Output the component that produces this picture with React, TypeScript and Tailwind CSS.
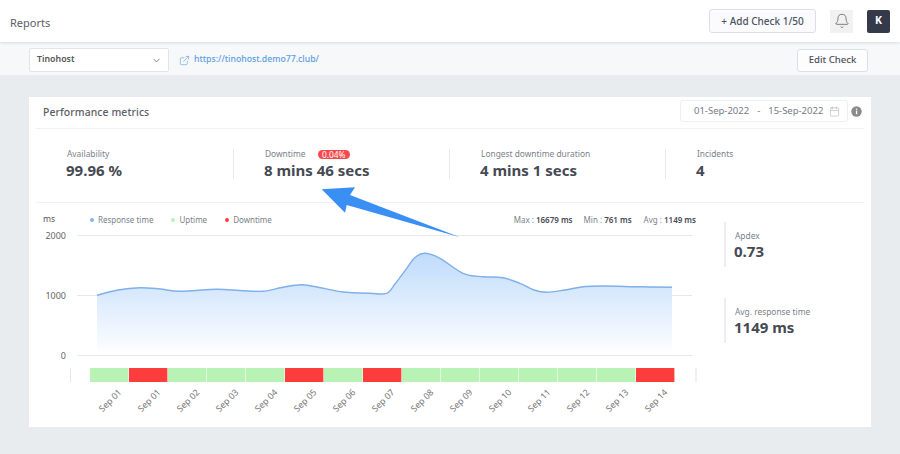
import React from "react";
import { Bell, Calendar, ChevronDown, ExternalLink } from "lucide-react";

const pts: [number, number][] = [
  [97, 295.3], [118, 290], [140, 287.7], [160, 289], [180, 291.3], [216.7, 289.3], [240, 290.5], [263, 291.3], [282, 287.5], [301.7, 284.7], [322, 288], [343, 292],
  [370, 293.3], [386.7, 293.3], [395, 284], [406.7, 268.3], [415, 257.5], [425, 253.3], [440, 258.3], [463, 273.3], [483, 276.7], [503, 277.7], [520, 283.3],
  [534, 290], [546.7, 292.3], [565, 290], [583, 286.7], [603, 286], [640, 286.8], [672, 287.3],
];

function linePath(p: [number, number][]) {
  let d = `M${p[0][0]} ${p[0][1]}`;
  for (let i = 0; i < p.length - 1; i++) {
    const a = p[Math.max(i - 1, 0)], b = p[i], c = p[i + 1], e = p[Math.min(i + 2, p.length - 1)];
    const c1x = b[0] + (c[0] - a[0]) / 6, c1y = b[1] + (c[1] - a[1]) / 6;
    const c2x = c[0] - (e[0] - b[0]) / 6, c2y = c[1] - (e[1] - b[1]) / 6;
    d += ` C${c1x.toFixed(1)} ${c1y.toFixed(1)} ${c2x.toFixed(1)} ${c2y.toFixed(1)} ${c[0]} ${c[1]}`;
  }
  return d;
}

const statuses = ["g", "r", "g", "g", "g", "r", "g", "r", "g", "g", "g", "g", "g", "g", "r"];
const labels = ["Sep 01", "Sep 01", "Sep 02", "Sep 03", "Sep 04", "Sep 05", "Sep 06", "Sep 07", "Sep 08", "Sep 09", "Sep 10", "Sep 11", "Sep 12", "Sep 13", "Sep 14"];

function Chart() {
  const line = linePath(pts);
  return (
    <svg width={664} height={202} viewBox="36 225 664 202" className="block">
      <defs>
        <linearGradient id="areaFill" x1="0" y1="253" x2="0" y2="355" gradientUnits="userSpaceOnUse">
          <stop offset="0" stopColor="#bfdbfb" />
          <stop offset="1" stopColor="#ffffff" />
        </linearGradient>
      </defs>
      {[[235, "2000"], [295, "1000"], [355, "0"]].map(([y, t]) => (
        <g key={String(t)}>
          <line x1={77} x2={692} y1={Number(y) + 0.5} y2={Number(y) + 0.5} stroke="#e8e8ea" strokeWidth={1} />
          <text x={66} y={Number(y) + 3.5} textAnchor="end" fontSize={9} fill="#666">{t}</text>
        </g>
      ))}
      <path d={`${line} L672 355 L97 355 Z`} fill="url(#areaFill)" />
      <path d={line} fill="none" stroke="#7fb0ea" strokeWidth={1.4} />
      <line x1={70.5} x2={70.5} y1={368} y2={382} stroke="#e6e6e8" />
      <rect x={695} y={368} width={2} height={14} fill="#eff0f6" />
      {statuses.map((s, i) => (
        <rect key={i} x={90 + i * 39} y={368} width={38.4} height={14} fill={s === "g" ? "#b9f2b5" : "#fd3c3c"} />
      ))}
      {labels.map((l, i) => (
        <text key={i} transform={`translate(${122 + i * 39} 393) rotate(-45)`} textAnchor="end" fontSize={8.8} fill="#777">{l}</text>
      ))}
    </svg>
  );
}

function Metric({ label, value, className, badge }: { label: string; value: string; className: string; badge?: string }) {
  return (
    <div className={`h-[30px] pl-[31px] ${className}`}>
      <div className="-mt-px flex h-[12px] items-center text-[8.4px] leading-[12px] text-[#7a7f8a]">
        <span className={badge ? "w-[53px]" : ""}>{label}</span>
        {badge && <span className="rounded-full bg-[#f9484c] px-[4px] text-[8.4px] leading-[9px] text-white">{badge}</span>}
      </div>
      <div className="ml-[-1px] text-[15px] font-bold leading-[21px] text-[#464a53]">{value}</div>
    </div>
  );
}

function Side({ label, value }: { label: string; value: string }) {
  return (
    <div className="h-[45px] border-l-2 border-[#eceef2] pl-[9px] pt-[8px]">
      <div className="text-[8.4px] leading-[12px] text-[#7a7f8a]">{label}</div>
      <div className="ml-[-1px] text-[15px] font-bold leading-[19px] text-[#464a53]">{value}</div>
    </div>
  );
}

function LegendItem({ color, text, className }: { color: string; text: string; className: string }) {
  return (
    <span className={`flex items-center gap-[4px] ${className}`}>
      <span className={`h-[4px] w-[4px] rounded-full ${color}`} />
      {text}
    </span>
  );
}

export default function App() {
  return (
    <div className="relative h-[454px] w-[900px] overflow-hidden bg-[#e9ecef] font-['Noto_Sans',sans-serif] text-[#464a53]">
      <header className="relative z-10 flex h-[42px] items-center justify-between bg-white pl-[10px] pr-[10px] shadow-[0_1px_3px_rgba(0,0,0,0.12)]">
        <span className="pt-[4px] text-[11px] text-[#5a5d66]">Reports</span>
        <div className="flex items-center">
          <button className="h-[24px] w-[107px] rounded-[3px] border border-[#dcdfe6] bg-[#fbfbfd] text-[10px] font-medium text-[#4b5160]">+ Add Check 1/50</button>
          <span className="ml-[14px] flex h-[23px] w-[23px] items-center justify-center bg-[#f1f1f1] text-[#555]">
            <Bell size={16} strokeWidth={1.1} />
          </span>
          <span className="ml-[14px] flex h-[23px] w-[23px] items-center justify-center rounded-[2px] bg-[#343a4a] text-[10.5px] font-bold text-white">K</span>
        </div>
      </header>

      <div className="flex h-[33px] items-center bg-[#f7f8fa] pl-[29px] pr-[32px] pt-[3px]">
        <div className="flex h-[24px] w-[140px] items-center justify-between rounded-[2px] border border-[#e2e4e9] bg-white pl-[7px] pr-[6px] text-[8.8px] font-semibold text-[#555]">
          Tinohost
          <ChevronDown size={11} className="text-[#777]" />
        </div>
        <ExternalLink size={11} strokeWidth={1.3} className="ml-[10px] text-[#5b9be0]" />
        <a className="ml-[4px] text-[8.7px] font-medium text-[#5a9de3]">https://tinohost.demo77.club/</a>
        <button className="ml-auto h-[23px] w-[71px] rounded-[3px] border border-[#dcdfe6] bg-[#fdfdfe] text-[9.6px] font-medium text-[#4b5160]">Edit Check</button>
      </div>

      <main className="ml-[29px] mt-[22px] h-[330px] w-[842px] bg-white px-[7px]">
        <div className="flex h-[32px] items-center justify-between border-b border-[#f0f1f4]">
          <h2 className="ml-[7px] text-[10.4px] font-medium tracking-[0.1px] text-[#5a5d66]">Performance metrics</h2>
          <div className="flex items-center pb-[3px]">
            <div className="flex h-[22px] w-[168px] items-center rounded-[3px] border border-[#eeeff2] pl-[13px] pr-[7px] text-[9.5px] text-[#777b84]">
              <span>01-Sep-2022</span>
              <span className="mx-[8px]">-</span>
              <span>15-Sep-2022</span>
              <Calendar size={11} strokeWidth={1} className="ml-auto text-[#999]" />
            </div>
            <svg width={11} height={11} viewBox="0 0 11 11" className="ml-[3px] mr-[2px]">
              <circle cx={5.5} cy={5.5} r={5.2} fill="#8a8a8a" />
              <rect x={4.9} y={4.6} width={1.3} height={3.6} fill="#fff" />
              <rect x={4.9} y={2.6} width={1.3} height={1.2} fill="#fff" />
            </svg>
          </div>
        </div>

        <div className="flex h-[74px] items-start border-b border-[#f0f1f4] pt-[20px]">
          <Metric label="Availability" value="99.96 %" className="w-[197px]" />
          <Metric label="Downtime" badge="0.04%" value="8 mins 46 secs" className="w-[216px] border-l border-[#e8eaf0]" />
          <Metric label="Longest downtime duration" value="4 mins 1 secs" className="w-[216px] border-l border-[#e8eaf0]" />
          <Metric label="Incidents" value="4" className="flex-1 border-l border-[#e8eaf0]" />
        </div>

        <div className="flex">
          <div className="w-[660px]">
            <div className="flex h-[22px] items-center pt-[11px] text-[8px] text-[#7a7f8a]">
              <span className="ml-[7px] w-[47px] text-[8.6px] text-[#555]">ms</span>
              <LegendItem color="bg-[#85b4ea]" text="Response time" className="mr-[18px]" />
              <LegendItem color="bg-[#b9f2b5]" text="Uptime" className="mr-[18px]" />
              <LegendItem color="bg-[#fd3c3c]" text="Downtime" className="" />
              <span className="ml-auto">
                Max : <b className="font-semibold text-[#464a53]">16679 ms</b>
                <span className="ml-[11px]">Min : </span><b className="font-semibold text-[#464a53]">761 ms</b>
                <span className="ml-[12px]">Avg : </span><b className="font-semibold text-[#464a53]">1149 ms</b>
              </span>
            </div>
            <Chart />
          </div>
          <div className="ml-[28px] flex flex-col gap-[31px] pt-[19px]">
            <Side label="Apdex" value="0.73" />
            <Side label="Avg. response time" value="1149 ms" />
          </div>
        </div>
      </main>

      <svg className="absolute left-0 top-0" width={900} height={454} viewBox="0 0 900 454">
        <polygon points="321.7,189.3 355,187.3 350,195 460,237.3 346.7,205 345,212.7" fill="#3a8ff5" />
      </svg>
    </div>
  );
}
